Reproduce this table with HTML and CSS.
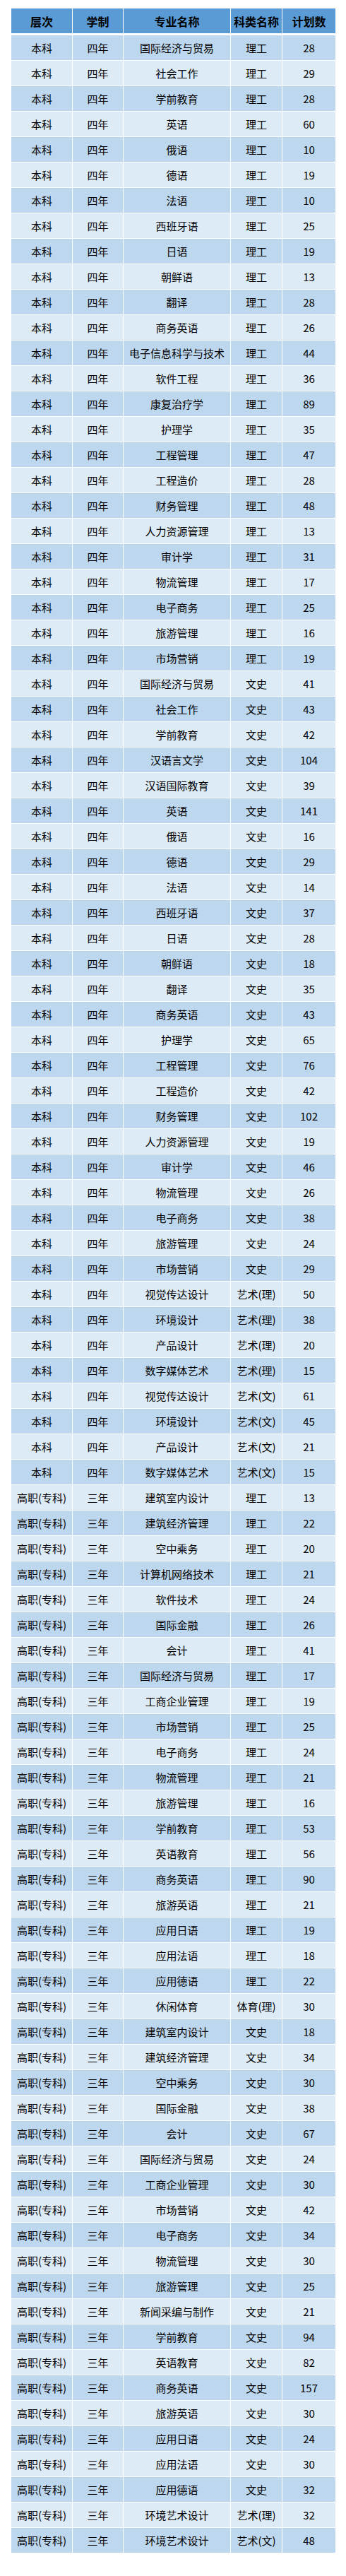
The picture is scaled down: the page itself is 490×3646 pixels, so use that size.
FILE: index.html
```html
<!DOCTYPE html>
<html lang="zh-CN">
<head>
<meta charset="utf-8">
<title>招生计划</title>
<link rel="stylesheet" href="styles.css">
</head>
<body>
<div class="page">
<table class="plan">
<colgroup>
<col class="c-level"><col class="c-years"><col class="c-major"><col class="c-type"><col class="c-num">
</colgroup>
<thead>
<tr><th>层次</th><th>学制</th><th>专业名称</th><th>科类名称</th><th>计划数</th></tr>
</thead>
<tbody>
<tr><td>本科</td><td>四年</td><td>国际经济与贸易</td><td>理工</td><td>28</td></tr>
<tr><td>本科</td><td>四年</td><td>社会工作</td><td>理工</td><td>29</td></tr>
<tr><td>本科</td><td>四年</td><td>学前教育</td><td>理工</td><td>28</td></tr>
<tr><td>本科</td><td>四年</td><td>英语</td><td>理工</td><td>60</td></tr>
<tr><td>本科</td><td>四年</td><td>俄语</td><td>理工</td><td>10</td></tr>
<tr><td>本科</td><td>四年</td><td>德语</td><td>理工</td><td>19</td></tr>
<tr><td>本科</td><td>四年</td><td>法语</td><td>理工</td><td>10</td></tr>
<tr><td>本科</td><td>四年</td><td>西班牙语</td><td>理工</td><td>25</td></tr>
<tr><td>本科</td><td>四年</td><td>日语</td><td>理工</td><td>19</td></tr>
<tr><td>本科</td><td>四年</td><td>朝鲜语</td><td>理工</td><td>13</td></tr>
<tr><td>本科</td><td>四年</td><td>翻译</td><td>理工</td><td>28</td></tr>
<tr><td>本科</td><td>四年</td><td>商务英语</td><td>理工</td><td>26</td></tr>
<tr><td>本科</td><td>四年</td><td>电子信息科学与技术</td><td>理工</td><td>44</td></tr>
<tr><td>本科</td><td>四年</td><td>软件工程</td><td>理工</td><td>36</td></tr>
<tr><td>本科</td><td>四年</td><td>康复治疗学</td><td>理工</td><td>89</td></tr>
<tr><td>本科</td><td>四年</td><td>护理学</td><td>理工</td><td>35</td></tr>
<tr><td>本科</td><td>四年</td><td>工程管理</td><td>理工</td><td>47</td></tr>
<tr><td>本科</td><td>四年</td><td>工程造价</td><td>理工</td><td>28</td></tr>
<tr><td>本科</td><td>四年</td><td>财务管理</td><td>理工</td><td>48</td></tr>
<tr><td>本科</td><td>四年</td><td>人力资源管理</td><td>理工</td><td>13</td></tr>
<tr><td>本科</td><td>四年</td><td>审计学</td><td>理工</td><td>31</td></tr>
<tr><td>本科</td><td>四年</td><td>物流管理</td><td>理工</td><td>17</td></tr>
<tr><td>本科</td><td>四年</td><td>电子商务</td><td>理工</td><td>25</td></tr>
<tr><td>本科</td><td>四年</td><td>旅游管理</td><td>理工</td><td>16</td></tr>
<tr><td>本科</td><td>四年</td><td>市场营销</td><td>理工</td><td>19</td></tr>
<tr><td>本科</td><td>四年</td><td>国际经济与贸易</td><td>文史</td><td>41</td></tr>
<tr><td>本科</td><td>四年</td><td>社会工作</td><td>文史</td><td>43</td></tr>
<tr><td>本科</td><td>四年</td><td>学前教育</td><td>文史</td><td>42</td></tr>
<tr><td>本科</td><td>四年</td><td>汉语言文学</td><td>文史</td><td>104</td></tr>
<tr><td>本科</td><td>四年</td><td>汉语国际教育</td><td>文史</td><td>39</td></tr>
<tr><td>本科</td><td>四年</td><td>英语</td><td>文史</td><td>141</td></tr>
<tr><td>本科</td><td>四年</td><td>俄语</td><td>文史</td><td>16</td></tr>
<tr><td>本科</td><td>四年</td><td>德语</td><td>文史</td><td>29</td></tr>
<tr><td>本科</td><td>四年</td><td>法语</td><td>文史</td><td>14</td></tr>
<tr><td>本科</td><td>四年</td><td>西班牙语</td><td>文史</td><td>37</td></tr>
<tr><td>本科</td><td>四年</td><td>日语</td><td>文史</td><td>28</td></tr>
<tr><td>本科</td><td>四年</td><td>朝鲜语</td><td>文史</td><td>18</td></tr>
<tr><td>本科</td><td>四年</td><td>翻译</td><td>文史</td><td>35</td></tr>
<tr><td>本科</td><td>四年</td><td>商务英语</td><td>文史</td><td>43</td></tr>
<tr><td>本科</td><td>四年</td><td>护理学</td><td>文史</td><td>65</td></tr>
<tr><td>本科</td><td>四年</td><td>工程管理</td><td>文史</td><td>76</td></tr>
<tr><td>本科</td><td>四年</td><td>工程造价</td><td>文史</td><td>42</td></tr>
<tr><td>本科</td><td>四年</td><td>财务管理</td><td>文史</td><td>102</td></tr>
<tr><td>本科</td><td>四年</td><td>人力资源管理</td><td>文史</td><td>19</td></tr>
<tr><td>本科</td><td>四年</td><td>审计学</td><td>文史</td><td>46</td></tr>
<tr><td>本科</td><td>四年</td><td>物流管理</td><td>文史</td><td>26</td></tr>
<tr><td>本科</td><td>四年</td><td>电子商务</td><td>文史</td><td>38</td></tr>
<tr><td>本科</td><td>四年</td><td>旅游管理</td><td>文史</td><td>24</td></tr>
<tr><td>本科</td><td>四年</td><td>市场营销</td><td>文史</td><td>29</td></tr>
<tr><td>本科</td><td>四年</td><td>视觉传达设计</td><td>艺术(理)</td><td>50</td></tr>
<tr><td>本科</td><td>四年</td><td>环境设计</td><td>艺术(理)</td><td>38</td></tr>
<tr><td>本科</td><td>四年</td><td>产品设计</td><td>艺术(理)</td><td>20</td></tr>
<tr><td>本科</td><td>四年</td><td>数字媒体艺术</td><td>艺术(理)</td><td>15</td></tr>
<tr><td>本科</td><td>四年</td><td>视觉传达设计</td><td>艺术(文)</td><td>61</td></tr>
<tr><td>本科</td><td>四年</td><td>环境设计</td><td>艺术(文)</td><td>45</td></tr>
<tr><td>本科</td><td>四年</td><td>产品设计</td><td>艺术(文)</td><td>21</td></tr>
<tr><td>本科</td><td>四年</td><td>数字媒体艺术</td><td>艺术(文)</td><td>15</td></tr>
<tr><td>高职(专科)</td><td>三年</td><td>建筑室内设计</td><td>理工</td><td>13</td></tr>
<tr><td>高职(专科)</td><td>三年</td><td>建筑经济管理</td><td>理工</td><td>22</td></tr>
<tr><td>高职(专科)</td><td>三年</td><td>空中乘务</td><td>理工</td><td>20</td></tr>
<tr><td>高职(专科)</td><td>三年</td><td>计算机网络技术</td><td>理工</td><td>21</td></tr>
<tr><td>高职(专科)</td><td>三年</td><td>软件技术</td><td>理工</td><td>24</td></tr>
<tr><td>高职(专科)</td><td>三年</td><td>国际金融</td><td>理工</td><td>26</td></tr>
<tr><td>高职(专科)</td><td>三年</td><td>会计</td><td>理工</td><td>41</td></tr>
<tr><td>高职(专科)</td><td>三年</td><td>国际经济与贸易</td><td>理工</td><td>17</td></tr>
<tr><td>高职(专科)</td><td>三年</td><td>工商企业管理</td><td>理工</td><td>19</td></tr>
<tr><td>高职(专科)</td><td>三年</td><td>市场营销</td><td>理工</td><td>25</td></tr>
<tr><td>高职(专科)</td><td>三年</td><td>电子商务</td><td>理工</td><td>24</td></tr>
<tr><td>高职(专科)</td><td>三年</td><td>物流管理</td><td>理工</td><td>21</td></tr>
<tr><td>高职(专科)</td><td>三年</td><td>旅游管理</td><td>理工</td><td>16</td></tr>
<tr><td>高职(专科)</td><td>三年</td><td>学前教育</td><td>理工</td><td>53</td></tr>
<tr><td>高职(专科)</td><td>三年</td><td>英语教育</td><td>理工</td><td>56</td></tr>
<tr><td>高职(专科)</td><td>三年</td><td>商务英语</td><td>理工</td><td>90</td></tr>
<tr><td>高职(专科)</td><td>三年</td><td>旅游英语</td><td>理工</td><td>21</td></tr>
<tr><td>高职(专科)</td><td>三年</td><td>应用日语</td><td>理工</td><td>19</td></tr>
<tr><td>高职(专科)</td><td>三年</td><td>应用法语</td><td>理工</td><td>18</td></tr>
<tr><td>高职(专科)</td><td>三年</td><td>应用德语</td><td>理工</td><td>22</td></tr>
<tr><td>高职(专科)</td><td>三年</td><td>休闲体育</td><td>体育(理)</td><td>30</td></tr>
<tr><td>高职(专科)</td><td>三年</td><td>建筑室内设计</td><td>文史</td><td>18</td></tr>
<tr><td>高职(专科)</td><td>三年</td><td>建筑经济管理</td><td>文史</td><td>34</td></tr>
<tr><td>高职(专科)</td><td>三年</td><td>空中乘务</td><td>文史</td><td>30</td></tr>
<tr><td>高职(专科)</td><td>三年</td><td>国际金融</td><td>文史</td><td>38</td></tr>
<tr><td>高职(专科)</td><td>三年</td><td>会计</td><td>文史</td><td>67</td></tr>
<tr><td>高职(专科)</td><td>三年</td><td>国际经济与贸易</td><td>文史</td><td>24</td></tr>
<tr><td>高职(专科)</td><td>三年</td><td>工商企业管理</td><td>文史</td><td>30</td></tr>
<tr><td>高职(专科)</td><td>三年</td><td>市场营销</td><td>文史</td><td>42</td></tr>
<tr><td>高职(专科)</td><td>三年</td><td>电子商务</td><td>文史</td><td>34</td></tr>
<tr><td>高职(专科)</td><td>三年</td><td>物流管理</td><td>文史</td><td>30</td></tr>
<tr><td>高职(专科)</td><td>三年</td><td>旅游管理</td><td>文史</td><td>25</td></tr>
<tr><td>高职(专科)</td><td>三年</td><td>新闻采编与制作</td><td>文史</td><td>21</td></tr>
<tr><td>高职(专科)</td><td>三年</td><td>学前教育</td><td>文史</td><td>94</td></tr>
<tr><td>高职(专科)</td><td>三年</td><td>英语教育</td><td>文史</td><td>82</td></tr>
<tr><td>高职(专科)</td><td>三年</td><td>商务英语</td><td>文史</td><td>157</td></tr>
<tr><td>高职(专科)</td><td>三年</td><td>旅游英语</td><td>文史</td><td>30</td></tr>
<tr><td>高职(专科)</td><td>三年</td><td>应用日语</td><td>文史</td><td>24</td></tr>
<tr><td>高职(专科)</td><td>三年</td><td>应用法语</td><td>文史</td><td>30</td></tr>
<tr><td>高职(专科)</td><td>三年</td><td>应用德语</td><td>文史</td><td>32</td></tr>
<tr><td>高职(专科)</td><td>三年</td><td>环境艺术设计</td><td>艺术(理)</td><td>32</td></tr>
<tr><td>高职(专科)</td><td>三年</td><td>环境艺术设计</td><td>艺术(文)</td><td>48</td></tr>
</tbody>
</table>
</div>
</body>
</html>
```
FILE: styles.css
```css
html, body {
  margin: 0;
  padding: 0;
  background: #ffffff;
}

.page {
  padding: 11px 0 32px 15px;
}

.plan {
  table-layout: fixed;
  border-collapse: separate;
  border-spacing: 1px;
  width: 461px;
  font-family: "Noto Sans CJK SC", "Noto Sans", sans-serif;
  font-size: 15px;
  color: #000000;
}

.c-level { width: 86px; }
.c-years { width: 71px; }
.c-major { width: 151px; }
.c-type { width: 72px; }
.c-num { width: 75px; }

.plan th,
.plan td {
  padding: 0;
  text-align: center;
  vertical-align: middle;
  white-space: nowrap;
  line-height: 1;
}

.plan th {
  height: 35px;
  background: #5b9bd5;
  font-weight: bold;
  font-size: 16px;
  border-bottom: 2px solid #ffffff;
}

.plan td {
  height: 35px;
  font-weight: normal;
}

.plan tbody tr:nth-child(odd) td {
  background: #bdd7ee;
}

.plan tbody tr:nth-child(even) td {
  background: #ddebf7;
}
```
